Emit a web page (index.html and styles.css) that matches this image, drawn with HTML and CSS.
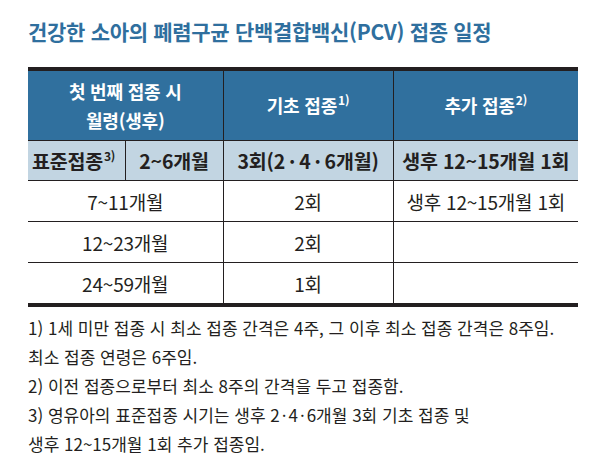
FILE: index.html
```html
<!DOCTYPE html>
<html lang="ko">
<head>
<meta charset="utf-8">
<link rel="stylesheet" href="styles.css">
</head>
<body>
<div class="page">
  <h1 class="title">건강한 소아의 폐렴구균 단백결합백신(PCV) 접종 일정</h1>
  <table class="schedule">
    <colgroup>
      <col class="c1a"><col class="c1b"><col class="c2"><col class="c3">
    </colgroup>
    <thead>
      <tr class="head">
        <th colspan="2">첫 번째 접종 시<br>월령(생후)</th>
        <th>기초 접종<sup>1)</sup></th>
        <th>추가 접종<sup>2)</sup></th>
      </tr>
      <tr class="sub">
        <td class="std">표준접종<sup>3)</sup></td>
        <td>2~6개월</td>
        <td>3회(2<span class="dot">·</span>4<span class="dot">·</span>6개월)</td>
        <td>생후 12~15개월 1회</td>
      </tr>
    </thead>
    <tbody>
      <tr><td colspan="2">7~11개월</td><td>2회</td><td>생후 12~15개월 1회</td></tr>
      <tr><td colspan="2">12~23개월</td><td>2회</td><td></td></tr>
      <tr><td colspan="2">24~59개월</td><td>1회</td><td></td></tr>
    </tbody>
  </table>
  <div class="notes">
    <p>1) 1세 미만 접종 시 최소 접종 간격은 4주, 그 이후 최소 접종 간격은 8주임.</p>
    <p>최소 접종 연령은 6주임.</p>
    <p>2) 이전 접종으로부터 최소 8주의 간격을 두고 접종함.</p>
    <p>3) 영유아의 표준접종 시기는 생후 2<span class="ndot">·</span>4<span class="ndot">·</span>6개월 3회 기초 접종 및</p>
    <p>생후 12~15개월 1회 추가 접종임.</p>
  </div>
</div>
</body>
</html>
```
FILE: styles.css
```css
html, body {
  margin: 0;
  padding: 0;
  background: #ffffff;
}
body {
  font-family: "Noto Sans CJK KR", "Noto Sans", sans-serif;
  color: #231f20;
}
.page {
  width: 550px;
  padding: 0 0 0 28px;
}
.title {
  margin: 0;
  padding-top: 16px;
  height: 67px;
  box-sizing: border-box;
  font-size: 21px;
  line-height: 30px;
  font-weight: 700;
  color: #2f6f9e;
  letter-spacing: -0.3px;
}
.schedule {
  width: 550px;
  border-collapse: collapse;
  table-layout: fixed;
  border-top: 4px solid #231f20;
  border-bottom: 4px solid #231f20;
}
.c1a { width: 97px; }
.c1b { width: 98px; }
.c2 { width: 170px; }
.c3 { width: 185px; }
.schedule th, .schedule td {
  padding: 0;
  text-align: center;
  border-left: 1px solid #231f20;
  border-bottom: 1px solid #231f20;
  white-space: nowrap;
}
.schedule tr > :first-child { border-left: none; }
.head th {
  height: 69px;
  background: #30709e;
  color: #ffffff;
  font-size: 18px;
  line-height: 29px;
  font-weight: 700;
  letter-spacing: -0.2px;
}
.sub td {
  height: 39px;
  background: #c2d5e2;
  font-size: 19.5px;
  font-weight: 700;
  letter-spacing: -0.2px;
  color: #231f20;
}
.sub td.std {
  text-align: left;
  padding-left: 4px;
}
tbody td {
  height: 40px;
  font-size: 19px;
  font-weight: 400;
  letter-spacing: -0.2px;
}
tbody tr:last-child td { border-bottom: none; }
.dot {
  margin: 0 4px;
}
.ndot {
  margin: 0 2px;
}
sup {
  font-size: 12px;
  line-height: 0;
  vertical-align: 8px;
  margin-left: 1px;
}
.notes {
  margin-top: 6px;
  font-size: 17px;
  line-height: 29px;
  letter-spacing: 0;
}
.notes p {
  margin: 0;
}
```
